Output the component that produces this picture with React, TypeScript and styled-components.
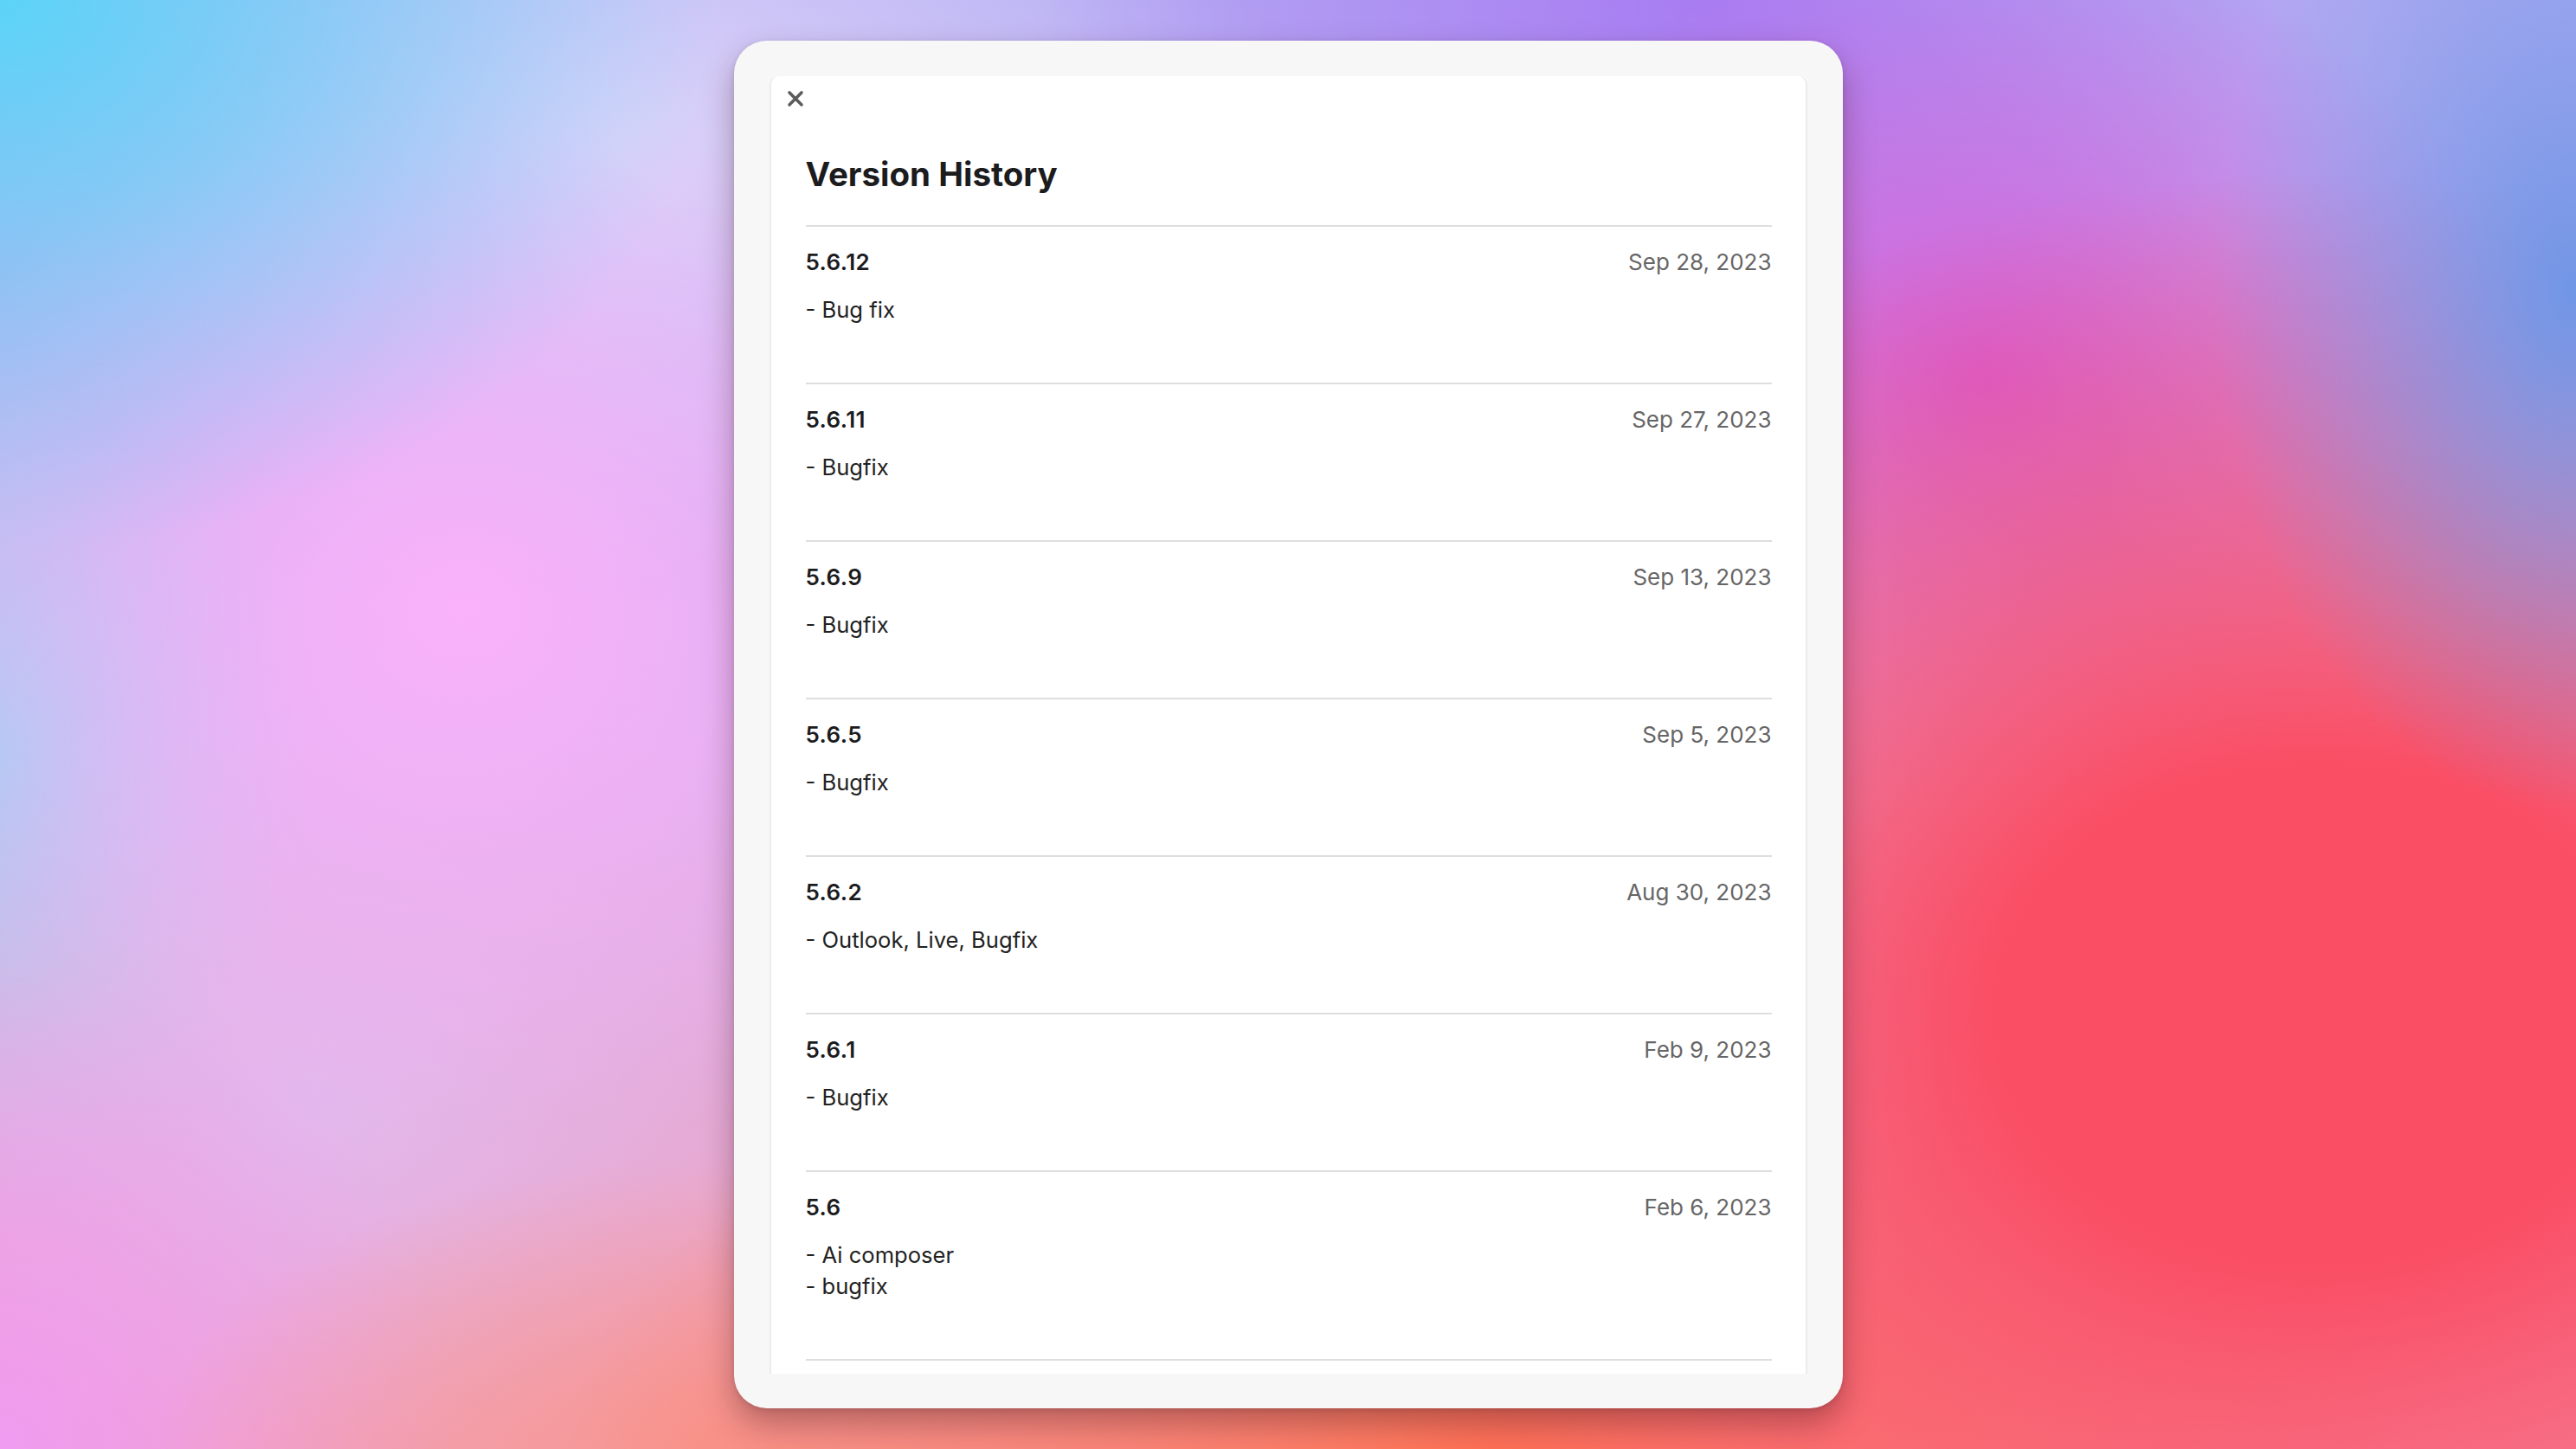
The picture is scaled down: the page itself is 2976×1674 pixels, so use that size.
import React from "react";
import styled, { createGlobalStyle } from "styled-components";

const versions = [
  { version: "5.6.12", date: "Sep 28, 2023", notes: ["- Bug fix"] },
  { version: "5.6.11", date: "Sep 27, 2023", notes: ["- Bugfix"] },
  { version: "5.6.9", date: "Sep 13, 2023", notes: ["- Bugfix"] },
  { version: "5.6.5", date: "Sep 5, 2023", notes: ["- Bugfix"] },
  { version: "5.6.2", date: "Aug 30, 2023", notes: ["- Outlook, Live, Bugfix"] },
  { version: "5.6.1", date: "Feb 9, 2023", notes: ["- Bugfix"] },
  { version: "5.6", date: "Feb 6, 2023", notes: ["- Ai composer", "- bugfix"] },
];

const App = () => {
  return (
    <>
      <GlobalStyle />
      <Backdrop>
        <Sheet>
          <Panel>
            <CloseRow>
              <CloseButton aria-label="Close">
                <svg width="20" height="20" viewBox="0 0 20 20">
                  <path
                    d="M3 3 L17 17 M17 3 L3 17"
                    stroke="#5c5c5c"
                    strokeWidth="3.6"
                    strokeLinecap="round"
                  />
                </svg>
              </CloseButton>
            </CloseRow>
            <Content>
              <Title>Version History</Title>
              <VersionList>
                {versions.map((v) => (
                  <VersionItem key={v.version}>
                    <VersionHeader>
                      <VersionName>{v.version}</VersionName>
                      <VersionDate>{v.date}</VersionDate>
                    </VersionHeader>
                    <Notes>
                      {v.notes.map((n) => (
                        <NoteLine key={n}>{n}</NoteLine>
                      ))}
                    </Notes>
                  </VersionItem>
                ))}
              </VersionList>
            </Content>
          </Panel>
        </Sheet>
      </Backdrop>
    </>
  );
};

export default App;

const GlobalStyle = createGlobalStyle`
  html, body {
    margin: 0;
    padding: 0;
    height: 100%;
    overflow: hidden;
  }
  body {
    font-family: Inter, "Liberation Sans", sans-serif;
  }
  * {
    box-sizing: border-box;
  }
`;

const Backdrop = styled.div`
  width: 100vw;
  height: 100vh;
  display: flex;
  align-items: center;
  justify-content: center;
  background:
    radial-gradient(ellipse 28% 38% at 0% 0%, rgba(92, 212, 247, 1), rgba(92, 212, 247, 0) 100%),
    radial-gradient(ellipse 14% 36% at 100% 20%, rgba(112, 150, 230, 1), rgba(112, 150, 230, 0) 100%),
    radial-gradient(ellipse 42% 58% at 90% 70%, rgba(250, 78, 100, 1) 30%, rgba(250, 78, 100, 0) 100%),
    radial-gradient(ellipse 22% 30% at 77% 26%, rgba(214, 88, 214, 0.95), rgba(214, 88, 214, 0) 100%),
    radial-gradient(ellipse 26% 28% at 66% 0%, rgba(168, 124, 242, 1), rgba(168, 124, 242, 0) 100%),
    radial-gradient(ellipse 36% 30% at 58% 100%, rgba(255, 116, 84, 1), rgba(255, 116, 84, 0) 100%),
    radial-gradient(ellipse 22% 20% at 28% 100%, rgba(248, 150, 140, 0.9), rgba(248, 150, 140, 0) 100%),
    radial-gradient(ellipse 18% 34% at 0% 100%, rgba(240, 156, 242, 1), rgba(240, 156, 242, 0) 100%),
    radial-gradient(ellipse 24% 36% at 18% 42%, rgba(250, 178, 250, 1), rgba(250, 178, 250, 0) 100%),
    radial-gradient(ellipse 20% 30% at 12% 76%, rgba(226, 186, 240, 0.9), rgba(226, 186, 240, 0) 100%),
    radial-gradient(ellipse 26% 30% at 24% 10%, rgba(222, 214, 250, 0.95), rgba(222, 214, 250, 0) 100%),
    radial-gradient(ellipse 12% 34% at 0% 52%, rgba(166, 206, 242, 1), rgba(166, 206, 242, 0) 100%),
    linear-gradient(180deg, #b4acf2 0%, #d8b0ee 50%, #f2a0b8 100%);
`;

const Sheet = styled.div`
  width: 1281px;
  height: 1580px;
  background: #f7f7f7;
  border-radius: 38px;
  padding: 41px 41px 40px 41px;
  box-shadow: 0 18px 36px rgba(60, 20, 30, 0.35), 0 2px 6px rgba(0, 0, 0, 0.12);
  display: flex;
`;

const Panel = styled.div`
  flex: 1;
  background: #ffffff;
  border-left: 2px solid #ececec;
  border-right: 2px solid #ececec;
  border-radius: 10px 10px 0 0;
  overflow: hidden;
  display: flex;
  flex-direction: column;
`;

const CloseRow = styled.div`
  padding: 16px 18px 0;
  display: flex;
`;

const CloseButton = styled.button`
  width: 20px;
  height: 20px;
  padding: 0;
  border: none;
  background: transparent;
  display: flex;
  cursor: pointer;

  > svg {
    display: block;
  }
`;

const Content = styled.div`
  padding: 0 39px 0 40px;
`;

const Title = styled.h1`
  margin: 53px 0 0;
  padding-bottom: 35px;
  border-bottom: 2px solid #dedede;
  font-size: 38.5px;
  line-height: 48px;
  font-weight: 700;
  color: #1c1c1e;
`;

const VersionList = styled.div`
  display: flex;
  flex-direction: column;
`;

const VersionItem = styled.div`
  padding: 23px 0 66px;
  border-bottom: 2px solid #dedede;
`;

const VersionHeader = styled.div`
  display: flex;
  justify-content: space-between;
  align-items: baseline;
  height: 36px;
  font-size: 26px;
  line-height: 36px;
`;

const VersionName = styled.span`
  font-weight: 600;
  letter-spacing: 0.4px;
  color: #1c1c1e;
`;

const VersionDate = styled.span`
  font-weight: 400;
  color: #666666;
`;

const Notes = styled.div`
  margin-top: 19px;
`;

const NoteLine = styled.div`
  font-size: 25.6px;
  line-height: 36px;
  color: #222222;
`;
